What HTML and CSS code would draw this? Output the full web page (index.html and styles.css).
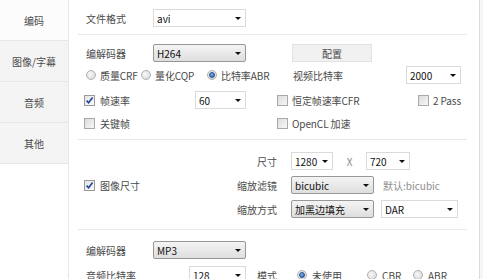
FILE: index.html
```html
<!DOCTYPE html>
<html lang="zh">
<head>
<meta charset="utf-8">
<link rel="stylesheet" href="styles.css">
</head>
<body>
<div class="window">
  <nav class="sidebar">
    <div class="tab active">编码</div>
    <div class="tab">图像/字幕</div>
    <div class="tab">音频</div>
    <div class="tab">其他</div>
  </nav>
  <main class="main">
    <section class="sec sec-format">
      <div class="row">
        <span class="lbl w69">文件格式</span>
        <div class="combo w93"><span>avi</span><i class="arrow"></i></div>
      </div>
    </section>

    <section class="sec sec-video">
      <div class="row">
        <span class="lbl w69">编解码器</span>
        <div class="combo gray w93"><span>H264</span><i class="arrow"></i></div>
        <button class="btn">配置</button>
      </div>
      <div class="row">
        <div class="cell-a">
          <label class="opt tight r1"><i class="radio"></i>质量CRF</label>
          <label class="opt tight r2"><i class="radio"></i>量化CQP</label>
          <label class="opt tight"><i class="radio on"></i>比特率ABR</label>
        </div>
        <div class="cell-b"><span class="lbl ml16">视频比特率</span></div>
        <div class="combo w55"><span>2000</span><i class="arrow"></i></div>
      </div>
      <div class="row">
        <div class="cell-a">
          <label class="opt w111"><i class="check on"><svg viewBox="0 0 9 9" width="9" height="9"><path d="M1.6 4.6 L3.6 6.8 L7.6 1.4" fill="none" stroke="#2446a0" stroke-width="1.6"/></svg></i>帧速率</label>
          <div class="combo w51"><span>60</span><i class="arrow"></i></div>
        </div>
        <div class="cell-b"><label class="opt tight"><i class="check"></i>恒定帧速率CFR</label></div>
        <div class="cell-c"><label class="opt tight"><i class="check"></i>2 Pass</label></div>
      </div>
      <div class="row">
        <div class="cell-a"><label class="opt"><i class="check"></i>关键帧</label></div>
        <div class="cell-b"><label class="opt tight"><i class="check"></i>OpenCL 加速</label></div>
      </div>
    </section>

    <section class="sec sec-size">
      <label class="opt size-check"><i class="check on"><svg viewBox="0 0 9 9" width="9" height="9"><path d="M1.6 4.6 L3.6 6.8 L7.6 1.4" fill="none" stroke="#2446a0" stroke-width="1.6"/></svg></i>图像尺寸</label>
      <span class="lbl rlbl">尺寸</span>
      <div class="ctrls">
        <div class="combo w42"><span>1280</span><i class="arrow"></i></div>
        <span class="times">X</span>
        <div class="combo w44"><span>720</span><i class="arrow"></i></div>
      </div>
      <span class="lbl rlbl">缩放滤镜</span>
      <div class="ctrls">
        <div class="combo gray w83"><span>bicubic</span><i class="arrow"></i></div>
        <span class="hint">默认:bicubic</span>
      </div>
      <span class="lbl rlbl">缩放方式</span>
      <div class="ctrls">
        <div class="combo gray w83"><span>加黑边填充</span><i class="arrow"></i></div>
        <div class="combo w77 ml7"><span>DAR</span><i class="arrow"></i></div>
      </div>
    </section>

    <section class="sec sec-audio">
      <div class="row">
        <span class="lbl w69">编解码器</span>
        <div class="combo gray w93"><span>MP3</span><i class="arrow"></i></div>
      </div>
      <div class="row">
        <span class="lbl w105">音频比特率</span>
        <div class="combo w57"><span>128</span><i class="arrow"></i></div>
        <span class="lbl mode">模式</span>
        <label class="opt a1"><i class="radio on"></i>未使用</label>
        <label class="opt a2"><i class="radio"></i>CBR</label>
        <label class="opt"><i class="radio"></i>ABR</label>
      </div>
    </section>
  </main>
  <div class="edge"></div>
</div>
</body>
</html>
```

FILE: styles.css
```css
* { box-sizing: border-box; }

body {
  margin: 0;
  width: 483px;
  height: 279px;
  overflow: hidden;
  background: #fff;
  font-family: "Noto Sans CJK SC", "Noto Sans", sans-serif;
  font-size: 10px;
  color: #4a4a4a;
}

.window {
  display: flex;
  height: 279px;
}

/* sidebar */
.sidebar {
  width: 69px;
  flex: none;
  border-right: 1px solid #e6e6e6;
  background: #fff;
}
.tab {
  height: 41px;
  border-bottom: 1px solid #e6e6e6;
  background: #f4f4f4;
  display: flex;
  align-items: center;
  justify-content: center;
  color: #4a4a4a;
}
.tab.active { background: #fcfcfc; }

/* main */
.main {
  width: 411px;
  flex: none;
  border-right: 1px solid #dcdcdc;
}
.edge {
  flex: 1;
  background: #f6f6f6;
}

.sec {
  margin: 0 12px 0 9px;
  padding-left: 6px;
  border-bottom: 1px solid #e9e9e9;
}

.row {
  display: flex;
  align-items: center;
  height: 18px;
}

.sec-format { padding: 9px 0 7px 6px; }

.sec-video {
  padding: 9px 0 7px 6px;
  display: grid;
  grid-template-rows: 22px 25px 23px 18px;
}

.sec-size {
  padding: 12px 0 11px 6px;
  display: grid;
  grid-template-columns: 130px 63px auto;
  grid-template-rows: 18px 18px 18px;
  row-gap: 6px;
  align-items: center;
}
.size-check {
  grid-column: 1;
  grid-row: 1 / 4;
  align-self: center;
}
.rlbl {
  grid-column: 2;
  text-align: right;
}
.ctrls {
  grid-column: 3;
  display: flex;
  align-items: center;
  margin-left: 14px;
  height: 18px;
}
.times {
  width: 33px;
  text-align: center;
  color: #8a8a8a;
}
.hint {
  margin-left: 9px;
  color: #8c8c8c;
}

.sec-audio {
  padding: 11px 0 0 6px;
  display: flex;
  flex-direction: column;
  gap: 7px;
  border-bottom: none;
}

/* labels */
.lbl { flex: none; white-space: nowrap; }
.w69 { width: 69px; padding-left: 2px; }
.w105 { width: 105px; padding-left: 2px; }
.ml16 { margin-left: 16px; }
.ml7 { margin-left: 7px; }
.mode { width: 31px; text-align: right; }

.cell-a { width: 193px; flex: none; display: flex; align-items: center; }
.cell-b { width: 129px; flex: none; display: flex; align-items: center; }
.cell-c { padding-left: 12px; display: flex; align-items: center; }

/* combo boxes */
.combo {
  flex: none;
  height: 18px;
  display: flex;
  align-items: center;
  justify-content: space-between;
  padding: 0 4px 0 3px;
  background: #fff;
  border: 1px solid #dadada;
  color: #111;
  white-space: nowrap;
}
.combo.gray {
  background: linear-gradient(#f4f4f4, #dedede);
  border-color: #979797;
  border-radius: 2px;
}
.arrow {
  width: 0;
  height: 0;
  border-left: 3px solid transparent;
  border-right: 3px solid transparent;
  border-top: 3px solid #111;
}
.w93 { width: 93px; }
.w55 { width: 55px; }
.w51 { width: 51px; }
.w42 { width: 42px; }
.w44 { width: 44px; }
.w83 { width: 83px; }
.w77 { width: 77px; }
.w57 { width: 57px; }

.btn {
  margin-left: 46px;
  width: 80px;
  height: 18px;
  padding: 0;
  background: #f1f1f1;
  border: 1px solid #e2e2e2;
  font: inherit;
  color: #4a4a4a;
}

/* options */
.opt {
  display: flex;
  align-items: center;
  flex: none;
  white-space: nowrap;
  gap: 5px;
}
.opt.tight { gap: 4px; letter-spacing: -0.1px; }
.r1 { width: 55px; margin-left: 2px; }
.r2 { width: 66px; }
.w111 { width: 111px; }
.a1 { width: 70px; margin-left: 20px; }
.a2 { width: 46px; }

.check {
  width: 11px;
  height: 11px;
  flex: none;
  border: 1px solid #a9a9a9;
  background: linear-gradient(135deg, #dcdcdc, #f7f7f7);
  display: flex;
  align-items: center;
  justify-content: center;
}
.check.on { background: linear-gradient(135deg, #e4e4e4, #fafafa); border-color: #9a9a9a; }

.radio {
  width: 10px;
  height: 10px;
  flex: none;
  border-radius: 50%;
  border: 1px solid #b0b0b0;
  background: radial-gradient(circle at 40% 40%, #f8f8f8, #d4d4d4);
  display: flex;
  align-items: center;
  justify-content: center;
}
.radio.on::after {
  content: "";
  width: 6px;
  height: 6px;
  border-radius: 50%;
  background: radial-gradient(circle at 40% 35%, #7fb3ea, #1f5fae);
  border: 1px solid #2a4f86;
  box-sizing: border-box;
}
```
